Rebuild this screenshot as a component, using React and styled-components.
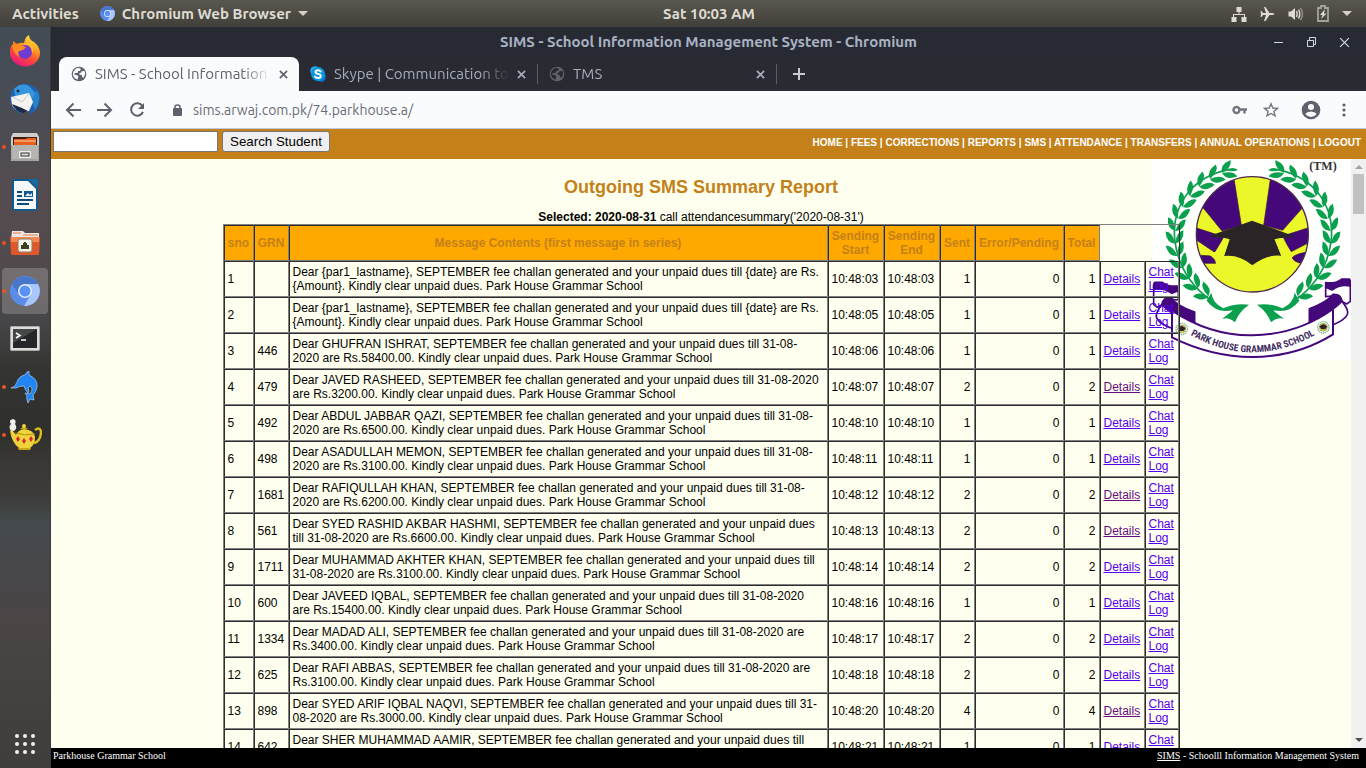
import React from "react";
import styled, { createGlobalStyle, css } from "styled-components";

const GlobalStyle = createGlobalStyle`
  * { box-sizing: border-box; }
  html, body, #root { height: 100%; }
  body { margin: 0; overflow: hidden; }
  button { cursor: pointer; }
`;

const uiFont = `"Ubuntu", "Noto Sans", "Open Sans", sans-serif`;
const pageFont = `"Liberation Sans", Arial, sans-serif`;

/* ---------- desktop ---------- */
const Desktop = styled.div`
  display: flex;
  flex-direction: column;
  height: 100vh;
  background: #3f3e3b;
`;
const TopBar = styled.header`
  flex: none;
  display: grid;
  grid-template-columns: 1fr auto 1fr;
  align-items: center;
  height: 27px;
  padding: 0 14px 0 12px;
  background: linear-gradient(#5a574f, #403f39);
  color: #dfdbd2;
  font: 700 15px/20px ${uiFont};
`;
const TopGroup = styled.div`
  display: flex;
  align-items: center;
  gap: ${(p) => p.$gap}px;
  justify-content: ${(p) => (p.$end ? "flex-end" : "flex-start")};
`;
const PlainButton = styled.button`
  display: flex;
  align-items: center;
  gap: 7px;
  padding: 0;
  border: 0;
  background: none;
  color: inherit;
  font: inherit;
  white-space: nowrap;
`;
const Clock = styled(PlainButton)`
  margin-left: 54px;
`;
const Workspace = styled.div`
  flex: 1;
  display: flex;
  min-height: 0;
`;
const Dock = styled.nav`
  flex: none;
  display: flex;
  flex-direction: column;
  width: 51px;
  border-right: 1px solid #3a3938;
  background: linear-gradient(
    #424d56 0%, #4c4c53 14%, #554c50 24%, #50494c 34%, #454547 40%,
    #343532 46%, #2f302d 55%, #3a3835 59%, #3c3b38 63%, #444a4e 67%,
    #46474a 72%, #4b4546 80%, #454241 88%, #3f3e3d 100%
  );
`;
const DockItem = styled.button`
  position: relative;
  display: grid;
  place-items: center;
  width: 46px;
  height: 46px;
  margin: 1px 2px;
  padding: 0;
  border: 0;
  border-radius: 4px;
  background: ${(p) => (p.$active ? "rgba(255,255,255,0.2)" : "none")};
  ${(p) =>
    p.$running &&
    css`
      &::before {
        content: "";
        position: absolute;
        left: 0;
        top: 21px;
        width: 4px;
        height: 4px;
        border-radius: 2px;
        background: #e95420;
      }
    `}
`;
const DockSpacer = styled.div`
  flex: 1;
`;

/* ---------- browser window ---------- */
const Browser = styled.main`
  flex: 1;
  display: flex;
  flex-direction: column;
  min-width: 0;
`;
const TitleBar = styled.div`
  flex: none;
  display: grid;
  grid-template-columns: 1fr auto 1fr;
  align-items: center;
  height: 30px;
  padding: 0 16px;
  background: #282a33;
  color: #a9b2c3;
  font: 700 15px/20px ${uiFont};
`;
const WindowButtons = styled.div`
  display: flex;
  justify-content: flex-end;
  gap: 20px;
  color: #d3dae3;
`;
const TabStrip = styled.div`
  flex: none;
  display: flex;
  align-items: center;
  height: 34px;
  padding-left: 8px;
  background: #2a2a33;
`;
const Tab = styled.div`
  display: flex;
  align-items: center;
  gap: 8px;
  width: ${(p) => (p.$active ? 240 : 239)}px;
  height: ${(p) => (p.$active ? 34 : 20)}px;
  padding: 0 11px 0 ${(p) => (p.$active ? 12 : 11)}px;
  border-radius: ${(p) => (p.$active ? "8px 8px 0 0" : 0)};
  border-right: ${(p) => (p.$active ? "0" : "1px solid #5b5d66")};
  background: ${(p) => (p.$active ? "#fafbfd" : "none")};
  color: ${(p) => (p.$active ? "#5c616c" : "#a4adba")};
  font: 400 15px/20px ${uiFont};
`;
const TabTitle = styled.span`
  flex: 1;
  min-width: 0;
  overflow: hidden;
  white-space: nowrap;
  mask-image: linear-gradient(to right, #000 84%, transparent);
`;
const NewTab = styled(PlainButton)`
  margin-left: 15px;
  color: #c5ccd6;
`;
const Toolbar = styled.div`
  flex: none;
  display: flex;
  align-items: center;
  gap: 14px;
  height: 38px;
  padding: 0 14px 0 13px;
  border-bottom: 1px solid #bccbe0;
  background: #fafbfd;
  color: #5c616c;
`;
const Address = styled.input`
  flex: 1;
  min-width: 0;
  margin-left: -4px;
  padding: 0;
  border: 0;
  outline: 0;
  background: none;
  color: #686c76;
  font: 400 14px/20px ${uiFont};
`;
const LockBox = styled.span`
  display: flex;
  margin-left: 11px;
`;

/* ---------- school site ---------- */
const SiteHeader = styled.div`
  flex: none;
  display: flex;
  justify-content: space-between;
  height: 30px;
  padding: 2px 5px 5px 2px;
  background: #c48119;
`;
const SearchForm = styled.form`
  display: flex;
  gap: 4px;
`;
const SearchInput = styled.input`
  width: 165px;
  height: 21px;
  border: 1px solid #767676;
  background: #fff;
`;
const SearchButton = styled.button`
  height: 21px;
  padding: 0 7px;
  border: 1px solid #767676;
  border-radius: 3px;
  background: #efefef;
  color: #000;
  font-family: ${pageFont};
`;
const SiteNav = styled.nav`
  align-self: center;
  color: #fff;
  font: 700 10px/12px ${pageFont};
  white-space: nowrap;
  a { color: inherit; text-decoration: none; }
`;
const Pane = styled.div`
  flex: 1;
  display: flex;
  min-height: 0;
  background: #feffee;
`;
const Page = styled.section`
  position: relative;
  flex: 1;
  min-width: 0;
  overflow: hidden;
  color: #000;
  font: 400 12px/14px ${pageFont};
  text-align: center;
`;
const Crest = styled.svg`
  position: absolute;
  top: 0;
  right: 0;
`;
const Report = styled.div`
  position: relative;
  padding-top: 18px;
`;
const Heading = styled.h2`
  margin: 0 0 13px;
  color: #c48119;
  font: 700 18px/20px ${pageFont};
`;
const Selected = styled.p`
  margin: 0;
`;
const ReportTable = styled.table`
  width: 957px;
  margin: 0 auto;
  table-layout: fixed;
  border: 1px outset gray;
  border-spacing: 0;
  text-align: left;
`;
const HeadCell = styled.th`
  height: 36px;
  padding: 3px;
  border: 1px inset gray;
  background: #ffa800;
  color: #c48119;
  text-align: center;
`;
const Cell = styled.td`
  height: 36px;
  padding: 3px;
  border: 1px inset gray;
  text-align: ${(p) => (p.$number ? "right" : "left")};
`;
const CellLink = styled.a`
  color: ${(p) => (p.$visited ? "#6a0d83" : "#5500ee")};
  text-decoration: underline;
`;
const ScrollBar = styled.div`
  flex: none;
  display: flex;
  flex-direction: column;
  align-items: center;
  width: 15px;
  padding: 6px 0 6px;
  background: #f1f1f1;
`;
const Thumb = styled.div`
  width: 11px;
  height: 40px;
  margin: 5px 0 auto;
  background: #c1c1c1;
`;
const SiteFooter = styled.footer`
  flex: none;
  display: flex;
  justify-content: space-between;
  height: 20px;
  padding: 2px 7px 0 2px;
  background: #000;
  color: #fff;
  font: 400 10px/12px "Liberation Serif", "Times New Roman", serif;
  a { color: inherit; }
`;

/* ---------- icons ---------- */
const Chromium = ({ size }) => (
  <svg width={size} height={size} viewBox="0 0 30 30">
    <circle cx="15" cy="15" r="15" fill="#5a8ce8" />
    <path d="M2 8 A15 15 0 0 1 28 8 H15 L8 17Z" fill="#4776cb" />
    <path d="M28 8 A15 15 0 0 1 14 30 L21 18 Q22 12 16 8Z" fill="#a9c7fa" />
    <circle cx="15" cy="15" r="7" fill="#e6eefc" />
    <circle cx="15" cy="15" r="5.5" fill="#5a92f3" />
  </svg>
);
const Caret = () => (
  <svg width="10" height="6" viewBox="0 0 10 6"><path d="M0 0H10L5 5Z" fill="#d5d1c8" /></svg>
);
const Globe = ({ color, land }) => (
  <svg width="16" height="16" viewBox="0 0 16 16">
    <circle cx="8" cy="8" r="7.3" fill={color} />
    <path d="M5 2.5 7.5 1.8 10 3 8.8 5H7.2L6.5 7H4L3 8.5 5.5 9 7.4 10 6.5 13.8 3.5 12 1.8 9 2.3 5.5Z M10.5 5.3 13.7 5 14.2 8 12.6 11.8 11 11 10.8 9 8.5 8.7 8.4 7 10 6.8Z" fill={land} />
  </svg>
);
const Skype = () => (
  <svg width="16" height="16" viewBox="0 0 16 16">
    <circle cx="5" cy="5" r="4.8" fill="#28a8ea" />
    <circle cx="11" cy="11" r="4.8" fill="#0078d4" />
    <circle cx="8" cy="8" r="7" fill="#0a96de" />
    <path d="M10.8 5.5Q9.8 4.2 8 4.2 5.5 4.2 5.5 6 5.5 7.4 8 7.9 10.8 8.4 10.8 10 10.8 12 8 12 6 12 5 10.5" fill="none" stroke="#fff" strokeWidth="1.9" strokeLinecap="round" />
  </svg>
);
const Cross = ({ size = 9, width = 1.9 }) => (
  <svg width={size} height={size} viewBox="0 0 10 10" fill="none" stroke="currentColor" strokeWidth={width}>
    <path d="M1 1 9 9M9 1 1 9" />
  </svg>
);
const NavIcon = ({ children, size = 18 }) => (
  <svg width={size} height={size} viewBox="0 0 18 18" fill="none" stroke="currentColor" strokeWidth="2">
    {children}
  </svg>
);

const Firefox = () => (
  <svg width="32" height="32" viewBox="0 0 32 32">
    <defs>
      <linearGradient id="fx" x1="0.8" y1="0" x2="0.3" y2="1">
        <stop offset="0" stopColor="#fff44f" /><stop offset=".35" stopColor="#ffa01e" />
        <stop offset=".65" stopColor="#ff4a35" /><stop offset="1" stopColor="#e31587" />
      </linearGradient>
    </defs>
    <path d="M4 6 8 9Q12 7 15 8 16 2 20 0 20 5 25 7 31 12 31 18A15 14 0 0 1 1 17Q1 11 4 9Z" fill="url(#fx)" />
    <circle cx="16" cy="17" r="7" fill="#6f3bd0" />
    <path d="M3 10Q9 7 14 11L17 12Q14 16 10 16 8 19 11 22 5 19 4 14Z" fill="#ff8b22" />
    <path d="M14 10Q23 8 23 18 26 14 23 9 19 5 14 10Z" fill="#ffbc2d" />
  </svg>
);
const Thunderbird = () => (
  <svg width="32" height="32" viewBox="0 0 32 32">
    <path d="M3 7 6 6Q12 -1 22 2 32 7 31 18 30 27 20 32L22 28 10 30Q0 24 1 13Z" fill="#1f5fae" />
    <path d="M5 6Q12 -1 20 3L28 12 26 25 22 17 6 13Z" fill="#3596df" />
    <path d="M28 7Q33 17 26 27L23 16Z" fill="#2583c9" />
    <path d="M2 14 20 10 24 19 20 28 13 29Q5 27 3 22Z" fill="#f4f3ef" />
    <path d="M4 14 13 19 20 11" fill="none" stroke="#c9c7c1" />
    <path d="M3 21 13 25 19 28 14 30Q6 28 3 21Z" fill="#202848" />
    <circle cx="9" cy="8" r="1.5" fill="#122d50" />
  </svg>
);
const Files = () => (
  <svg width="30" height="30" viewBox="0 0 30 30">
    <path d="M3 1H27L29 5V29H1V5Z" fill="#cfcecb" />
    <rect x="3" y="5" width="24" height="8" fill="#3f1c12" />
    <path d="M4 7H16L17 6H26V13H4Z" fill="#e7601d" />
    <path d="M4 9H26" stroke="#ffd6a8" />
    <rect x="1" y="13" width="28" height="16" rx="1" fill="#a5a5a2" />
    <rect x="2" y="13" width="26" height="14" fill="#b4b4b1" />
    <rect x="9" y="19" width="12" height="7" rx="1" fill="#eee" />
    <rect x="11" y="21" width="8" height="3" fill="#ddd" stroke="#333" />
  </svg>
);
const Writer = () => (
  <svg width="26" height="32" viewBox="0 0 26 32">
    <path d="M1 0H16L26 10V30Q26 32 24 32H2Q0 32 0 30V2Q0 0 1 0Z" fill="#11598f" />
    <path d="M2 2H16L24 10V30H2Z" fill="#f5f7f8" />
    <path d="M16 0H26V9Z" fill="#146aa5" />
    <path d="M5 13H10M5 17H10M5 21H21M5 25H17" stroke="#0c4b7b" strokeWidth="2" />
    <rect x="12" y="12" width="9" height="6" fill="#11598f" />
    <path d="M13 17 16 14 18 16 20 14V17Z" fill="#e7f4fa" />
  </svg>
);
const NetFolder = () => (
  <svg width="30" height="26" viewBox="0 0 30 26">
    <path d="M2 1H13L15 3H29V10H1Z" fill="#ece9e5" />
    <path d="M3 3H11M13 5H28" stroke="#ee7a45" />
    <path d="M0 7H30L29 24Q29 25 27 25H3Q1 25 1 24Z" fill="#df582c" />
    <path d="M1 7H29V12H1Z" fill="#f08a52" />
    <rect x="8" y="9" width="14" height="13" rx="2" fill="#f5f2e9" stroke="#8d7c69" />
    <path d="M11 19V15H13V13H14V12H16V13H17V15H19V19Z" fill="#3b4120" />
  </svg>
);
const Terminal = () => (
  <svg width="30" height="26" viewBox="0 0 30 26">
    <rect x=".5" y=".5" width="29" height="24" rx="1" fill="#deddd9" stroke="#aaa" />
    <rect x="3" y="3" width="24" height="19" fill="#262728" />
    <path d="M3 3H27L3 17Z" fill="#444647" />
    <path d="M6 7 10 9.5 6 12M11 14H16" fill="none" stroke="#fff" strokeWidth="1.6" />
  </svg>
);
const Dolphin = () => (
  <svg width="28" height="32" viewBox="0 0 28 32">
    <path d="M0 17Q5 16 6 11 8 5 14 4 16 0 18 0L18 4Q27 8 26 16 25 21 22 24L23 29 19 28 17 32Q15 27 16 25L14 22 19 23Q23 18 19 15L17 17Q19 20 17 22 14 19 13 15 8 15 5 17Z" fill="#2185f3" stroke="#aacff5" strokeWidth=".7" />
  </svg>
);
const Teapot = () => (
  <svg width="34" height="34" viewBox="0 0 34 34">
    <path d="M3 13Q0 9 3 6 0 2 5 1 9 2 7 6 10 10 6 13Z" fill="#eeeeeb" />
    <path d="M27 12Q33 8 33 15 32 24 26 25" fill="none" stroke="#dfbe19" strokeWidth="2.4" />
    <path d="M4 12 8 17Q10 12 16 11 26 12 27 19 27 27 22 30H11Q4 25 2 13Z" fill="#efd33a" />
    <path d="M12 11Q16 7 20 11ZM10 30H23L22 32H11Z" fill="#caa519" />
    <circle cx="16" cy="8" r="2" fill="#efd33a" />
    <path d="M7 15Q16 18 27 16" fill="none" stroke="#b98d12" />
    <path d="M10 18 12 21 10 24 8 21ZM16 20 18 23 16 26 14 23ZM23 18 25 21 23 24 21 21Z" fill="#d22a31" />
  </svg>
);
const AppsGrid = () => (
  <svg width="22" height="22" viewBox="0 0 22 22" fill="#f1f1f0">
    {[3, 11, 19].map((y) => [3, 11, 19].map((x) => <circle key={`${x}-${y}`} cx={x} cy={y} r="2" />))}
  </svg>
);

/* ---------- school crest ---------- */
const laurel = Array.from({ length: 13 }, (_, i) => {
  const deg = 22 + i * 10.2;
  const a = (deg * Math.PI) / 180;
  return { x: 515 - 232 * Math.sin(a), y: 264 - 212 * Math.cos(a), rot: -deg };
});
const Wreath = () => (
  <g fill="#0aa04d">
    <path d="M445 58C330 82 270 170 283 275Q298 385 392 452" fill="none" stroke="#0aa04d" strokeWidth="5" />
    {laurel.map((l) => (
      <g key={l.rot} transform={`translate(${l.x} ${l.y}) rotate(${l.rot})`}>
        <path d="M-4 0Q-2 -26 34 -27Q32 -6 -4 0Z" />
        <path d="M-4 0Q-2 26 34 27Q32 6 -4 0Z" />
      </g>
    ))}
    <path d="M438 60Q455 48 472 60Q455 68 438 60Z" />
    <path d="M392 428Q395 458 428 475Q465 458 505 464Q474 486 463 517Q444 500 424 506Q448 490 456 481Q408 492 378 452Z" />
  </g>
);
/* right-hand end of the ribbon; the left one mirrors it */
const RibbonEnd = () => (
  <g stroke="#44087a" strokeWidth="5" strokeLinejoin="round">
    <path d="M735 412V440L756 438 798 462 809 454V402Z" fill="#fff" />
    <path d="M735 412V398Q768 401 783 387H806Q812 396 808 408Q780 402 754 420Z" fill="#44087a" />
    <path d="M757 524Q790 512 800 494Q806 480 782 452L748 478V522Z" fill="#fff" />
    <path d="M686 476Q738 458 757 433Q780 431 784 452Q776 466 748 482L738 490V512Q710 508 686 518Z" fill="#44087a" />
  </g>
);
const MiniCrest = ({ x, y }) => (
  <g transform={`translate(${x} ${y})`}>
    <circle r="17" fill="#fff" stroke="#75bb88" strokeWidth="4" strokeDasharray="4 2" />
    <circle r="12" fill="#e1e33a" stroke="#44087a" />
    <path d="M-12 -3 0 -10 12 -3 6 6H-6Z" fill="#2b2229" />
  </g>
);
const SchoolCrest = () => (
  <Crest width="199" height="201" viewBox="214 27 597 603" role="img" aria-label="Park House Grammar School">
    <rect x="214" y="27" width="597" height="603" fill="#fffffe" />
    <clipPath id="disc"><ellipse cx="515" cy="253" rx="168" ry="173" /></clipPath>
    <g clipPath="url(#disc)">
      <rect x="340" y="75" width="350" height="360" fill="#ecf72a" />
      <g fill="#44087a" stroke="#3a1b3c" strokeWidth="2">
        <path d="M456 60 482 226 424 243 366 172 350 120Z" />
        <path d="M573 60 549 226 606 241 665 174 690 120Z" />
        <path d="M335 230 434 262 402 307 335 262Z" />
        <path d="M700 228 606 258 630 306 700 270Z" />
        <path d="M340 315 398 318 405 340 340 340Z" />
        <path d="M690 306Q650 308 634 323Q644 344 690 340Z" />
      </g>
    </g>
    <path d="M386 258 514 212 645 260 604 264 582 268 602 317Q558 312 515 346Q475 312 430 318L446 268 420 264Z" fill="#2b2426" />
    <path d="M429 263 447 268 430 318 404 330 380 308 404 306Z" fill="#ecf72a" />
    <path d="M582 268 604 264 632 307 645 310 626 330 602 317Z" fill="#ecf72a" />
    <ellipse cx="515" cy="253" rx="168" ry="173" fill="none" stroke="#4c2a4c" strokeWidth="4" />
    <Wreath />
    <g transform="translate(1034 0) scale(-1 1)"><Wreath /></g>
    <RibbonEnd />
    <g transform="translate(1028 10) scale(-1 1)"><RibbonEnd /></g>
    <path d="M274 482Q390 558 515 556Q650 554 757 477V553Q650 620 515 621Q390 620 274 562Z" fill="#fff" stroke="#44087a" strokeWidth="6" />
    <path id="motto" d="M320 550Q420 607 515 607Q612 607 712 550" fill="none" />
    <text fill="#44305f" fontFamily="'Liberation Sans Narrow', 'Roboto Condensed', 'Liberation Sans', sans-serif" fontWeight="700" fontSize="29">
      <textPath href="#motto" startOffset="50%" textAnchor="middle">PARK HOUSE GRAMMAR SCHOOL</textPath>
    </text>
    <MiniCrest x={303} y={537} />
    <MiniCrest x={728} y={532} />
    <text x="727" y="59" textAnchor="middle" fill="#333" fontFamily="'Liberation Serif', serif" fontWeight="700" fontSize="36">(TM)</text>
  </Crest>
);

/* ---------- data ---------- */
const columns = [
  ["sno", 30], ["GRN", 35], ["Message Contents (first message in series)", 539],
  ["Sending Start", 56], ["Sending End", 56], ["Sent", 35], ["Error/Pending", 89],
  ["Total", 36], ["", 45], ["", 34],
];
const fee = (name, amount) =>
  `Dear ${name}, SEPTEMBER fee challan generated and your unpaid dues till 31-08-2020 are Rs.${amount}.00. Kindly clear unpaid dues. Park House Grammar School`;
const template =
  "Dear {par1_lastname}, SEPTEMBER fee challan generated and your unpaid dues till {date} are Rs.{Amount}. Kindly clear unpaid dues. Park House Grammar School";
const rows = [
  ["", template, "03", 1], ["", template, "05", 1],
  ["446", fee("GHUFRAN ISHRAT", 58400), "06", 1],
  ["479", fee("JAVED RASHEED", 3200), "07", 2, true],
  ["492", fee("ABDUL JABBAR QAZI", 6500), "10", 1],
  ["498", fee("ASADULLAH MEMON", 3100), "11", 1],
  ["1681", fee("RAFIQULLAH KHAN", 6200), "12", 2, true],
  ["561", fee("SYED RASHID AKBAR HASHMI", 6600), "13", 2, true],
  ["1711", fee("MUHAMMAD AKHTER KHAN", 3100), "14", 2],
  ["600", fee("JAVEED IQBAL", 15400), "16", 1],
  ["1334", fee("MADAD ALI", 3400), "17", 2],
  ["625", fee("RAFI ABBAS", 3100), "18", 2],
  ["898", fee("SYED ARIF IQBAL NAQVI", 3000), "20", 4, true],
  ["642", fee("SHER MUHAMMAD AAMIR", 3100), "21", 1],
];
const menu = ["HOME", "FEES", "CORRECTIONS", "REPORTS", "SMS", "ATTENDANCE", "TRANSFERS", "ANNUAL OPERATIONS", "LOGOUT"];
const dockApps = [
  ["Firefox", Firefox], ["Thunderbird", Thunderbird], ["Files", Files, true],
  ["Writer", Writer], ["Network folder", NetFolder, true],
  ["Chromium", () => <Chromium size={30} />, true, true],
  ["Terminal", Terminal], ["Dolphin", Dolphin, true], ["Teapot", Teapot, true],
];

const BrowserChrome = () => (
  <>
    <TitleBar>
      <span />
      <span>SIMS - School Information Management System - Chromium</span>
      <WindowButtons>
        <PlainButton aria-label="Minimize">
          <svg width="13" height="12"><path d="M2 6.5H11" stroke="currentColor" /></svg>
        </PlainButton>
        <PlainButton aria-label="Restore">
          <svg width="14" height="12" fill="none" stroke="currentColor"><path d="M2.500 4.500H8.500V10.500H2.500ZM4.500 4V1.500H10.500V8.500H9" /></svg>
        </PlainButton>
        <PlainButton aria-label="Close"><Cross size={11} width={1.1} /></PlainButton>
      </WindowButtons>
    </TitleBar>
    <TabStrip>
      <Tab $active>
        <Globe color="#5c616c" land="#fafbfd" />
        <TabTitle>SIMS - School Information</TabTitle>
        <PlainButton aria-label="Close tab"><Cross /></PlainButton>
      </Tab>
      <Tab>
        <Skype />
        <TabTitle>Skype | Communication to</TabTitle>
        <PlainButton aria-label="Close tab"><Cross /></PlainButton>
      </Tab>
      <Tab>
        <Globe color="#5f626d" land="#2a2a33" />
        <TabTitle>TMS</TabTitle>
        <PlainButton aria-label="Close tab"><Cross /></PlainButton>
      </Tab>
      <NewTab aria-label="New tab">
        <svg width="14" height="14" stroke="currentColor" strokeWidth="2"><path d="M1 7H13M7 1V13" /></svg>
      </NewTab>
    </TabStrip>
    <Toolbar>
      <PlainButton aria-label="Back"><NavIcon><path d="M17 9H3M9.500 2.500 3 9 9.500 15.500" /></NavIcon></PlainButton>
      <PlainButton aria-label="Forward"><NavIcon><path d="M1 9H15M8.500 2.500 15 9 8.500 15.500" /></NavIcon></PlainButton>
      <PlainButton aria-label="Reload">
        <NavIcon>
          <path d="M14.500 5A6.200 6.200 0 1 0 15 11" />
          <path d="M16 2V8H10Z" fill="currentColor" stroke="none" />
        </NavIcon>
      </PlainButton>
      <LockBox>
        <svg width="12" height="14" viewBox="0 0 12 14">
          <rect x="2" y="5" width="9" height="8" rx="1" fill="currentColor" />
          <path d="M4 6V4Q4 2 6.500 2 9 2 9 4V6" fill="none" stroke="currentColor" strokeWidth="1.500" />
        </svg>
      </LockBox>
      <Address aria-label="Address" defaultValue="sims.arwaj.com.pk/74.parkhouse.a/" />
      <PlainButton aria-label="Passwords">
        <svg width="18" height="14" viewBox="0 0 18 14" fill="none" stroke="#73767f" strokeWidth="2.400">
          <circle cx="5.500" cy="7" r="3" /><path d="M8 6.500H16M13.500 6.500V10.500" />
        </svg>
      </PlainButton>
      <PlainButton aria-label="Bookmark">
        <svg width="16" height="16" viewBox="0 0 16 16" fill="none" stroke="#73767f" strokeWidth="1.400">
          <path d="M8 1.800 9.800 6 14.400 6.400 10.900 9.400 12 13.900 8 11.500 4 13.900 5.100 9.400 1.600 6.400 6.200 6Z" />
        </svg>
      </PlainButton>
      <PlainButton aria-label="Profile">
        <svg width="30" height="20" viewBox="4 0 30 20">
          <circle cx="22" cy="10" r="9.300" fill="#5c616c" />
          <circle cx="22" cy="7" r="3" fill="#fafbfd" />
          <path d="M16.300 14Q18 11.500 22 11.500T27.700 14Q25.500 17 22 17T16.300 14Z" fill="#fafbfd" />
        </svg>
      </PlainButton>
      <PlainButton aria-label="Menu">
        <svg width="15" height="16" viewBox="0 0 15 16" fill="currentColor">
          <circle cx="7" cy="3" r="1.600" /><circle cx="7" cy="8" r="1.600" /><circle cx="7" cy="13" r="1.600" />
        </svg>
      </PlainButton>
    </Toolbar>
  </>
);

const Site = () => (
  <>
    <SiteHeader>
      <SearchForm onSubmit={(e) => e.preventDefault()}>
        <SearchInput aria-label="Student" />
        <SearchButton>Search Student</SearchButton>
      </SearchForm>
      <SiteNav>
        {menu.map((m, i) => (
          <React.Fragment key={m}>{i > 0 && " | "}<a href="#">{m}</a></React.Fragment>
        ))}
      </SiteNav>
    </SiteHeader>
    <Pane>
      <Page>
        <SchoolCrest />
        <Report>
          <Heading>Outgoing SMS Summary Report</Heading>
          <Selected><b>Selected: 2020-08-31</b> call attendancesummary('2020-08-31')</Selected>
          <ReportTable>
            <colgroup>{columns.map(([, w], i) => <col key={i} width={w} />)}</colgroup>
            <thead>
              <tr>{columns.slice(0, 8).map(([label]) => <HeadCell key={label}>{label}</HeadCell>)}</tr>
            </thead>
            <tbody>
              {rows.map(([grn, message, second, count, visited], i) => (
                <tr key={i}>
                  <Cell>{i + 1}</Cell>
                  <Cell>{grn}</Cell>
                  <Cell>{message}</Cell>
                  <Cell>10:48:{second}</Cell>
                  <Cell>10:48:{second}</Cell>
                  <Cell $number>{count}</Cell>
                  <Cell $number>0</Cell>
                  <Cell $number>{count}</Cell>
                  <Cell><CellLink href="#" $visited={visited}>Details</CellLink></Cell>
                  <Cell><CellLink href="#">Chat Log</CellLink></Cell>
                </tr>
              ))}
            </tbody>
          </ReportTable>
        </Report>
      </Page>
      <ScrollBar>
        <svg width="8" height="4"><path d="M0 4H8L4 0Z" fill="#a3a3a3" /></svg>
        <Thumb />
        <svg width="8" height="4"><path d="M0 0H8L4 4Z" fill="#505050" /></svg>
      </ScrollBar>
    </Pane>
    <SiteFooter>
      <span>Parkhouse Grammar School</span>
      <span><a href="#">SIMS</a> - Schoolll Information Management System</span>
    </SiteFooter>
  </>
);

export default function App() {
  return (
    <Desktop>
      <GlobalStyle />
      <TopBar>
        <TopGroup $gap={21}>
          <PlainButton>Activities</PlainButton>
          <PlainButton><Chromium size={15} />Chromium Web Browser<Caret /></PlainButton>
        </TopGroup>
        <Clock>Sat 10:03 AM</Clock>
        <TopGroup $gap={13} $end>
          <svg width="16" height="16" viewBox="0 0 16 16" fill="#dfdbd2">
            <path d="M5.500 1H10.500V6H8.500V8H14V11H15.500V16H10.500V11H13V9H3V11H5.500V16H.5V11H2V8H7.500V6H5.500Z" />
          </svg>
          <svg width="15" height="16" viewBox="0 0 15 16" fill="#dfdbd2">
            <path d="M14.500 8Q14 7 12 7H9.500L5.500 1H4L6 7H3L1.500 5H.5L1 8 .5 11H1.500L3 9H6L4 15H5.500L9.500 9H12Q14 9 14.500 8Z" />
          </svg>
          <svg width="16" height="16" viewBox="0 0 16 16" fill="none" stroke="#dfdbd2" strokeWidth="1.500">
            <path d="M.5 5.500H3L7 2V14L3 10.500H.5Z" fill="#dfdbd2" stroke="none" />
            <path d="M8.500 5Q10 8 8.500 11M10.500 3.500Q13 8 10.500 12.500" />
            <path d="M12.500 2Q16.500 8 12.500 14" stroke="#908d86" />
          </svg>
          <svg width="12" height="18" viewBox="0 0 12 18">
            <path d="M4 1H8V3H11V16H1V3H4Z" fill="none" stroke="#a5a29b" strokeWidth="1.800" />
            <path d="M8 4 3 10H5.500L4 14 9.500 8.500H7Z" fill="#dfdbd2" />
          </svg>
          <Caret />
        </TopGroup>
      </TopBar>
      <Workspace>
        <Dock>
          {dockApps.map(([name, Icon, running, active]) => (
            <DockItem key={name} aria-label={name} $running={running} $active={active}><Icon /></DockItem>
          ))}
          <DockSpacer />
          <DockItem aria-label="Show Applications"><AppsGrid /></DockItem>
        </Dock>
        <Browser>
          <BrowserChrome />
          <Site />
        </Browser>
      </Workspace>
    </Desktop>
  );
}
